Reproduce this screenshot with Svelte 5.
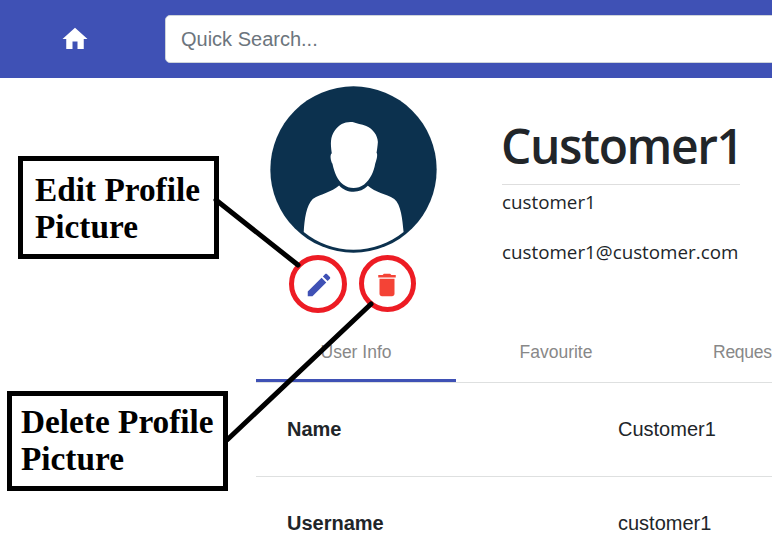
<script>
  const tabs = ['User Info', 'Favourite', 'Reques'];
  const details = [
    { label: 'Name', value: 'Customer1' },
    { label: 'Username', value: 'customer1' },
  ];
  let active = $state(0);
</script>

<div class="page">
  <header>
    <a class="home" href="#home" aria-label="Home">
      <svg viewBox="0 0 24 24"><path d="M10 20v-6h4v6h5v-8h3L12 3 2 12h3v8z" /></svg>
    </a>
    <input type="text" placeholder="Quick Search..." aria-label="Quick Search" />
  </header>

  <main>
    <section class="profile">
      <div class="picture">
        <svg class="avatar" viewBox="30 18 500 500">
          <circle cx="280" cy="268" r="249" fill="#0c314e" />
          <path fill="#fff" d="M215 219C211 190 210 171 224 151C238 132 255 124 277 126C290 131 304 132 318 138C339 147 352 166 353 186C352 198 351 208 349 218C353 223 350 237 345 251C341 276 329 299 312 313C292 327 268 327 249 313C232 300 223 279 217 251C211 239 209 223 215 219Z" />
          <path fill="#fff" d="M237 316C259 341 301 341 323 317C346 337 376 341 402 356C423 374 426 416 430 455C388 489 337 508 280 508C222 508 173 489 131 455C133 417 139 374 158 356C184 341 214 336 237 316Z" />
        </svg>
        <div class="actions">
          <button class="edit" aria-label="Edit profile picture">
            <svg viewBox="0 0 24 24"><path d="M3 17.25V21h3.750L17.810 9.940l-3.750-3.750L3 17.250zM20.710 7.040c.39-.39.39-1.020 0-1.410l-2.340-2.340c-.39-.39-1.020-.39-1.410 0l-1.830 1.830 3.750 3.750 1.830-1.830z" /></svg>
          </button>
          <button class="delete" aria-label="Delete profile picture">
            <svg viewBox="0 0 24 24"><path d="M6 19c0 1.100.9 2 2 2h8c1.100 0 2-.9 2-2V7H6v12zM19 4h-3.500l-1-1h-5l-1 1H5v2h14V4z" /></svg>
          </button>
        </div>
      </div>
      <div class="identity">
        <h1>Customer1</h1>
        <p class="user">customer1</p>
        <p class="mail">customer1@customer.com</p>
      </div>
    </section>

    <nav>
      {#each tabs as tab, i}
        <button class:active={active === i} onclick={() => (active = i)}>{tab}</button>
      {/each}
    </nav>

    <dl>
      {#each details as row}
        <div class="row">
          <dt>{row.label}</dt>
          <dd>{row.value}</dd>
        </div>
      {/each}
    </dl>
  </main>

  <svg class="marks" viewBox="0 0 772 545">
    <g fill="none" stroke="#ed1c24" stroke-width="5">
      <circle cx="318" cy="284" r="26.500" />
      <circle cx="387.500" cy="283.500" r="26" />
    </g>
    <g stroke="#000" stroke-width="5" stroke-linecap="round">
      <path d="M216 200L298 265" />
      <path d="M227 440L371 304" />
    </g>
  </svg>
  <div class="callout edit-note">Edit Profile<br />Picture</div>
  <div class="callout delete-note">Delete Profile<br />Picture</div>
</div>

<style>
  :global(body) { margin: 0; background: #fff; }
  .page {
    position: relative;
    width: 772px;
    height: 545px;
    overflow: hidden;
    color: #212529;
    font-family: "Liberation Sans", Arial, sans-serif;
  }
  .page * { box-sizing: border-box; }
  header {
    display: flex;
    align-items: center;
    height: 78px;
    padding-left: 60px;
    background: #3f51b5;
  }
  .home { width: 30px; height: 30px; margin-right: 75px; fill: #fff; }
  .home svg, button svg { display: block; width: 30px; height: 30px; }
  input {
    flex: 0 0 700px;
    height: 48px;
    padding: 0 15px;
    border: 1px solid #ced4da;
    border-radius: 5px;
    background: #fff;
    font: 20px "Liberation Sans", Arial, sans-serif;
  }
  input::placeholder { color: #6c757d; opacity: 1; }
  main { width: 900px; padding-left: 256px; }
  .profile { display: flex; height: 244px; padding: 8px 0 0 14px; }
  .picture { width: 167px; margin-right: 65px; }
  .avatar { display: block; width: 167px; height: 167px; }
  .actions { display: flex; gap: 38px; padding: 17px 0 0 34px; }
  button { padding: 0; border: 0; background: none; font-family: inherit; }
  .edit { fill: #3f51b5; }
  .delete { fill: #f44336; }
  .identity { width: 238px; font-family: "Open Sans", "Noto Sans", sans-serif; }
  h1 {
    height: 99px;
    margin: 0;
    padding-top: 30px;
    border-bottom: 1px solid #dedede;
    font-size: 48px;
    font-weight: 600;
    line-height: 60px;
    letter-spacing: -1.400px;
    text-indent: -1px;
  }
  p { margin: 0; font-size: 18.800px; line-height: 30px; white-space: nowrap; }
  .user { padding-top: 2px; }
  .mail { padding-top: 20px; }
  nav { display: flex; height: 61px; border-bottom: 1px solid #dee0e0; }
  nav button {
    flex: 0 0 200px;
    height: 60px;
    padding-top: 3px;
    border-bottom: 3px solid transparent;
    color: #888;
    font-size: 17.500px;
  }
  nav button:last-child { padding-left: 57px; text-align: left; letter-spacing: -0.250px; }
  nav .active { border-bottom-color: #3f51b5; }
  dl { margin: 0; }
  .row {
    display: flex;
    align-items: center;
    height: 94px;
    padding-left: 31px;
    border-bottom: 1px solid #dee0e0;
    font-size: 20px;
  }
  dt { width: 331px; font-weight: bold; }
  dd { margin: 0; }
  .marks { position: absolute; inset: 0; width: 772px; height: 545px; pointer-events: none; }
  .callout {
    position: absolute;
    border: 5px solid #000;
    color: #000;
    font: bold 33.300px/37px "Liberation Serif", "Times New Roman", serif;
    white-space: nowrap;
  }
  .edit-note { left: 18px; top: 156px; width: 201px; height: 103px; padding: 10px 0 0 12px; }
  .delete-note { left: 7px; top: 391px; width: 221px; height: 100px; padding: 7px 0 0 9px; }
</style>
